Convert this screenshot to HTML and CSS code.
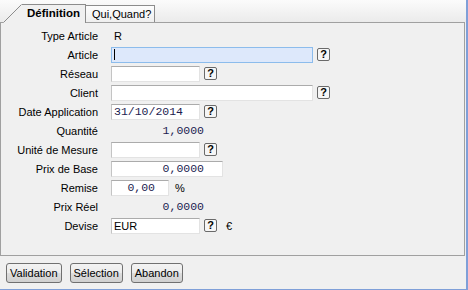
FILE: index.html
```html
<!DOCTYPE html>
<html lang="fr">

<head>
    <meta charset="UTF-8">
    <title>Article</title>
    <link rel="stylesheet" href="styles.css">
</head>

<body>
    <div class="window">
        <div class="tabs">
            <div class="tab active">
                <svg class="tab-slant" width="19" height="19" viewBox="0 0 19 19">
                    <polygon points="0,19 18,0 19,0 19,19" fill="#f0f0f0" />
                    <line x1="0.5" y1="18.5" x2="18.5" y2="0.5" stroke="#8c8c8c" />
                </svg>
                Définition
            </div>
            <div class="tab">Qui,Quand?</div>
        </div>

        <div class="panel">
            <div class="form">
                <div class="label">Type Article</div>
                <div class="cell"><span class="value">R</span></div>

                <div class="label">Article</div>
                <div class="cell">
                    <div class="field focus w-long"><span class="caret"></span></div>
                    <span class="help">?</span>
                </div>

                <div class="label">Réseau</div>
                <div class="cell">
                    <div class="field w-mid"></div>
                    <span class="help">?</span>
                </div>

                <div class="label">Client</div>
                <div class="cell">
                    <div class="field w-long"></div>
                    <span class="help">?</span>
                </div>

                <div class="label">Date Application</div>
                <div class="cell">
                    <div class="field w-mid mono">31/10/2014</div>
                    <span class="help">?</span>
                </div>

                <div class="label">Quantité</div>
                <div class="cell"><span class="number mono">1,0000</span></div>

                <div class="label">Unité de Mesure</div>
                <div class="cell">
                    <div class="field w-mid"></div>
                    <span class="help">?</span>
                </div>

                <div class="label">Prix de Base</div>
                <div class="cell">
                    <div class="field w-price mono right">0,0000</div>
                </div>

                <div class="label">Remise</div>
                <div class="cell">
                    <div class="field w-short mono right short-pad">0,00</div>
                    <span class="unit">%</span>
                </div>

                <div class="label">Prix Réel</div>
                <div class="cell"><span class="number mono">0,0000</span></div>

                <div class="label">Devise</div>
                <div class="cell">
                    <div class="field w-mid">EUR</div>
                    <span class="help">?</span>
                    <span class="currency">€</span>
                </div>
            </div>
        </div>

        <div class="actions">
            <button class="btn">Validation</button>
            <button class="btn">Sélection</button>
            <button class="btn">Abandon</button>
        </div>
    </div>
</body>

</html>
```

FILE: styles.css
```css
body {
    margin: 0;
    background-color: #f0f0f0;
    font-family: "Liberation Sans", Arial, sans-serif;
    font-size: 11px;
    color: #000;
    overflow: hidden;
}

.window {
    width: 466px;
    height: 289px;
    border-right: 2px solid #7f9fd8;
    border-bottom: 1px solid #7f9fd8;
}

/* ------ TABS ------ */
.tabs {
    position: relative;
    z-index: 1;
    display: flex;
    align-items: flex-end;
    height: 22px;
    padding-left: 22px;
    background: linear-gradient(#fbfbfb, #ebebeb);
}

.tab {
    position: relative;
    box-sizing: border-box;
    height: 17px;
    width: 69px;
    padding: 2px 0 0 6px;
    border-top: 1px solid #8c8c8c;
    border-right: 1px solid #8c8c8c;
    background: linear-gradient(#fdfdfd, #efefef);
    white-space: nowrap;
}

.tab.active {
    height: 19px;
    width: 64px;
    margin-bottom: -1px;
    padding: 2px 0 0 5px;
    font-weight: bold;
    font-size: 11.5px;
    background: #f0f0f0;
}

.tab-slant {
    position: absolute;
    left: -19px;
    top: -1px;
}

/* ------ PANEL ------ */
.panel {
    box-sizing: border-box;
    width: 465px;
    height: 234px;
    padding-top: 3px;
    border: 1px solid #a0a0a0;
}

.form {
    display: grid;
    grid-template-columns: 97px auto;
    grid-auto-rows: 19px;
    column-gap: 13px;
    align-items: center;
}

.label {
    text-align: right;
    white-space: nowrap;
}

.cell {
    display: flex;
    align-items: center;
    gap: 4px;
}

.value {
    padding-left: 3px;
}

.field {
    box-sizing: border-box;
    height: 16px;
    padding: 0 2px;
    line-height: 14px;
    background-color: #fff;
    border: 1px solid #e3e3e3;
    border-top-color: #ababab;
    border-left-color: #c4c4c4;
    white-space: nowrap;
}

.field.focus {
    background-color: #dde8fb;
    border-color: #8cbcec;
}

.caret {
    display: inline-block;
    width: 1px;
    height: 11px;
    margin-top: 1px;
    vertical-align: top;
    background-color: #000;
}

.w-long { width: 202px; }
.w-mid { width: 89px; }
.w-price { width: 112px; }
.w-short { width: 58px; }

.mono {
    font-family: "Liberation Mono", "Courier New", monospace;
    font-size: 11.5px;
    color: #1c1c50;
}

.right {
    text-align: right;
    padding-right: 18px;
}

.right.short-pad {
    padding-right: 13px;
}

.number {
    width: 93px;
    text-align: right;
}

.help {
    box-sizing: border-box;
    width: 13px;
    height: 13px;
    border: 1px solid #6a6a6a;
    border-radius: 2px;
    background-color: #f6f6f6;
    font-weight: bold;
    font-size: 11px;
    line-height: 11px;
    text-align: center;
}

.unit {
    margin-left: 2px;
}

.currency {
    margin-left: 5px;
}

/* ------ BUTTONS ------ */
.actions {
    display: flex;
    gap: 8px;
    padding: 7px 0 0 6px;
}

.btn {
    box-sizing: border-box;
    height: 20px;
    padding: 0 3px;
    font-family: "Liberation Sans", Arial, sans-serif;
    font-size: 11px;
    color: #000;
    border: 1px solid #707070;
    border-radius: 3px;
    background: linear-gradient(#f3f3f3 0%, #ebebeb 50%, #dddddd 51%, #d0d0d0 100%);
}
```
